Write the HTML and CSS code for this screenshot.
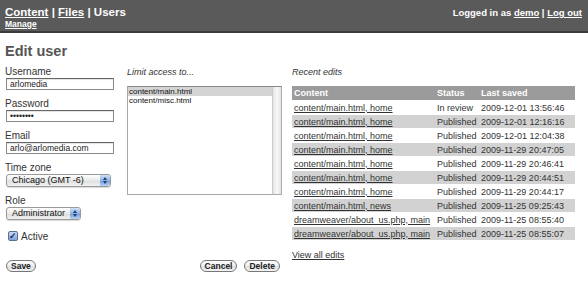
FILE: index.html
```html
<!DOCTYPE html>
<html lang="en">
<head>
    <meta charset="UTF-8">
    <title>Edit user</title>
    <link rel="stylesheet" href="styles.css">
</head>
<body>
    <header class="topbar">
        <div class="nav">
            <div class="nav-main"><a href="#">Content</a> | <a href="#">Files</a> | Users</div>
            <div class="nav-sub"><a href="#">Manage</a></div>
        </div>
        <div class="account">Logged in as <a href="#">demo</a> | <a href="#">Log out</a></div>
    </header>
    <main>
        <h1>Edit user</h1>
        <div class="columns">
            <div class="col-fields">
                <div class="field">
                    <label>Username</label>
                    <div class="input">arlomedia</div>
                </div>
                <div class="field">
                    <label>Password</label>
                    <div class="input">&bull;&bull;&bull;&bull;&bull;&bull;&bull;&bull;</div>
                </div>
                <div class="field">
                    <label>Email</label>
                    <div class="input">arlo@arlomedia.com</div>
                </div>
                <div class="field">
                    <label>Time zone</label>
                    <div class="select select-tz"><span class="select-text">Chicago (GMT -6)</span><span class="arrows"><i class="up"></i><i class="down"></i></span></div>
                </div>
                <div class="field">
                    <label>Role</label>
                    <div class="select select-role"><span class="select-text">Administrator</span><span class="arrows"><i class="up"></i><i class="down"></i></span></div>
                </div>
                <div class="check-row">
                    <span class="checkbox">&#10003;</span>
                    <span>Active</span>
                </div>
                <div class="buttons buttons-left">
                    <button class="btn">Save</button>
                </div>
            </div>

            <div class="col-access">
                <div class="caption">Limit access to...</div>
                <div class="listbox">
                    <div class="list-items">
                        <div class="item selected">content/main.html</div>
                        <div class="item">content/misc.html</div>
                    </div>
                    <div class="scrolltrack"></div>
                </div>
                <div class="buttons buttons-right">
                    <button class="btn">Cancel</button>
                    <button class="btn">Delete</button>
                </div>
            </div>

            <div class="col-edits">
                <div class="caption">Recent edits</div>
                <table class="edits">
                    <thead>
                        <tr>
                            <th class="c-content">Content</th>
                            <th class="c-status">Status</th>
                            <th>Last saved</th>
                        </tr>
                    </thead>
                    <tbody>
                        <tr><td><a href="#">content/main.html, home</a></td><td>In review</td><td>2009-12-01 13:56:46</td></tr>
                        <tr><td><a href="#">content/main.html, home</a></td><td>Published</td><td>2009-12-01 12:16:16</td></tr>
                        <tr><td><a href="#">content/main.html, home</a></td><td>Published</td><td>2009-12-01 12:04:38</td></tr>
                        <tr><td><a href="#">content/main.html, home</a></td><td>Published</td><td>2009-11-29 20:47:05</td></tr>
                        <tr><td><a href="#">content/main.html, home</a></td><td>Published</td><td>2009-11-29 20:46:41</td></tr>
                        <tr><td><a href="#">content/main.html, home</a></td><td>Published</td><td>2009-11-29 20:44:51</td></tr>
                        <tr><td><a href="#">content/main.html, home</a></td><td>Published</td><td>2009-11-29 20:44:17</td></tr>
                        <tr><td><a href="#">content/main.html, news</a></td><td>Published</td><td>2009-11-25 09:25:43</td></tr>
                        <tr><td><a href="#">dreamweaver/about_us.php, main</a></td><td>Published</td><td>2009-11-25 08:55:40</td></tr>
                        <tr><td><a href="#">dreamweaver/about_us.php, main</a></td><td>Published</td><td>2009-11-25 08:55:07</td></tr>
                    </tbody>
                </table>
                <div class="view-all"><a href="#">View all edits</a></div>
            </div>
        </div>
    </main>
</body>
</html>
```

FILE: styles.css
```css
body {
    font-family: 'Liberation Sans', Arial, sans-serif;
    font-size: 10px;
    color: #333;
    background-color: white;
    margin: 0;
    padding: 0;
}
a {
    color: #333;
}
.topbar {
    display: flex;
    justify-content: space-between;
    height: 31px;
    padding: 0 6px 0 5px;
    background-color: #5a5a5a;
    border-bottom: 2px solid #3c3c3c;
    color: white;
    font-weight: bold;
}
.topbar a {
    color: white;
}
.nav-main {
    font-size: 11.5px;
    line-height: 13px;
    margin-top: 6px;
}
.nav-sub {
    font-size: 8.5px;
    line-height: 11px;
    margin-top: 0;
}
.account {
    font-size: 9.5px;
    line-height: 13px;
    margin-top: 6px;
}
main {
    padding: 0 5px;
}
h1 {
    font-size: 14.5px;
    line-height: 19px;
    color: #555;
    margin: 9px 0 5px 0;
}
.columns {
    display: flex;
    align-items: stretch;
}
.col-fields {
    width: 107px;
    display: flex;
    flex-direction: column;
}
.col-access {
    width: 155px;
    margin-left: 15px;
    display: flex;
    flex-direction: column;
}
.col-edits {
    width: 283px;
    margin-left: 10px;
}
.field {
    margin-bottom: 8px;
}
.field label {
    display: block;
    line-height: 12px;
}
.input {
    width: 103px;
    height: 10px;
    margin-left: 1px;
    border: 1px solid #8a8a8a;
    border-top-color: #666;
    font-size: 8.5px;
    line-height: 10px;
    padding: 0 0 0 3px;
    color: #222;
    box-shadow: inset 0 1px 1px rgba(0, 0, 0, 0.12);
}
.select {
    display: flex;
    align-items: center;
    height: 11px;
    margin-left: 1px;
    border: 1px solid #999;
    border-radius: 3px;
    background: linear-gradient(#ffffff, #e8e8e8 50%, #dcdcdc 51%, #f2f2f2);
    font-size: 9px;
    color: #111;
    box-shadow: 0 1px 1px rgba(0, 0, 0, 0.15);
}
.select-tz {
    width: 103px;
}
.select-role {
    width: 73px;
}
.select-text {
    flex: 1;
    padding-left: 5px;
    line-height: 11px;
}
.arrows {
    width: 10px;
    height: 11px;
    display: flex;
    flex-direction: column;
    align-items: center;
    justify-content: center;
    gap: 1px;
    background: linear-gradient(#cfe0f5, #8fb2e0 50%, #6f99d6 51%, #b9d3f3);
    border-radius: 0 3px 3px 0;
}
.arrows .up {
    width: 0;
    height: 0;
    border-left: 2px solid transparent;
    border-right: 2px solid transparent;
    border-bottom: 3px solid #1d3f78;
}
.arrows .down {
    width: 0;
    height: 0;
    border-left: 2px solid transparent;
    border-right: 2px solid transparent;
    border-top: 3px solid #1d3f78;
}
.check-row {
    display: flex;
    align-items: center;
    gap: 3px;
    margin-top: 2px;
    height: 12px;
}
.checkbox {
    width: 8px;
    height: 8px;
    margin-left: 3px;
    border: 1px solid #5a6f96;
    border-radius: 2px;
    background: linear-gradient(#c9dbf4, #7fa4dc);
    color: #1a2d55;
    font-size: 9px;
    line-height: 8px;
    font-weight: bold;
    text-align: center;
}
.buttons {
    margin-top: auto;
    display: flex;
    gap: 6px;
}
.buttons-left {
    margin-top: 18px;
}
.buttons-right {
    justify-content: flex-end;
    padding-right: 2px;
}
.btn {
    height: 12px;
    padding: 0 4px;
    border: 1px solid #777;
    border-radius: 7px;
    background: linear-gradient(#ffffff, #eeeeee 50%, #dedede 51%, #f4f4f4);
    font-family: 'Liberation Sans', Arial, sans-serif;
    font-size: 8.5px;
    font-weight: bold;
    line-height: 10px;
    color: #222;
    margin-left: 1px;
}
.caption {
    font-style: italic;
    font-size: 9px;
    line-height: 12px;
    margin-bottom: 8px;
}
.listbox {
    display: flex;
    height: 107px;
    border: 1px solid #aaa;
    border-top-color: #888;
}
.list-items {
    flex: 1;
}
.item {
    font-size: 8px;
    line-height: 9px;
    padding-left: 1px;
    color: #111;
}
.item.selected {
    background-color: #d4d4d4;
}
.scrolltrack {
    width: 8px;
    border-left: 1px solid #ccc;
    background: linear-gradient(90deg, #e4e4e4, #f8f8f8 50%, #e4e4e4);
}
.edits {
    width: 283px;
    border-collapse: collapse;
    font-size: 9px;
}
.edits th {
    background-color: #9b9b9b;
    color: white;
    text-align: left;
    height: 14px;
    padding: 0 2px;
    border-bottom: 1px solid white;
}
.edits td {
    height: 13px;
    padding: 0 2px;
    white-space: nowrap;
    border-bottom: 1px solid white;
}
.edits .c-content {
    width: 139px;
}
.edits .c-status {
    width: 40px;
}
.edits tbody tr:nth-child(even) {
    background-color: #d2d2d2;
}
.view-all {
    margin-top: 9px;
    font-size: 9px;
}
```
